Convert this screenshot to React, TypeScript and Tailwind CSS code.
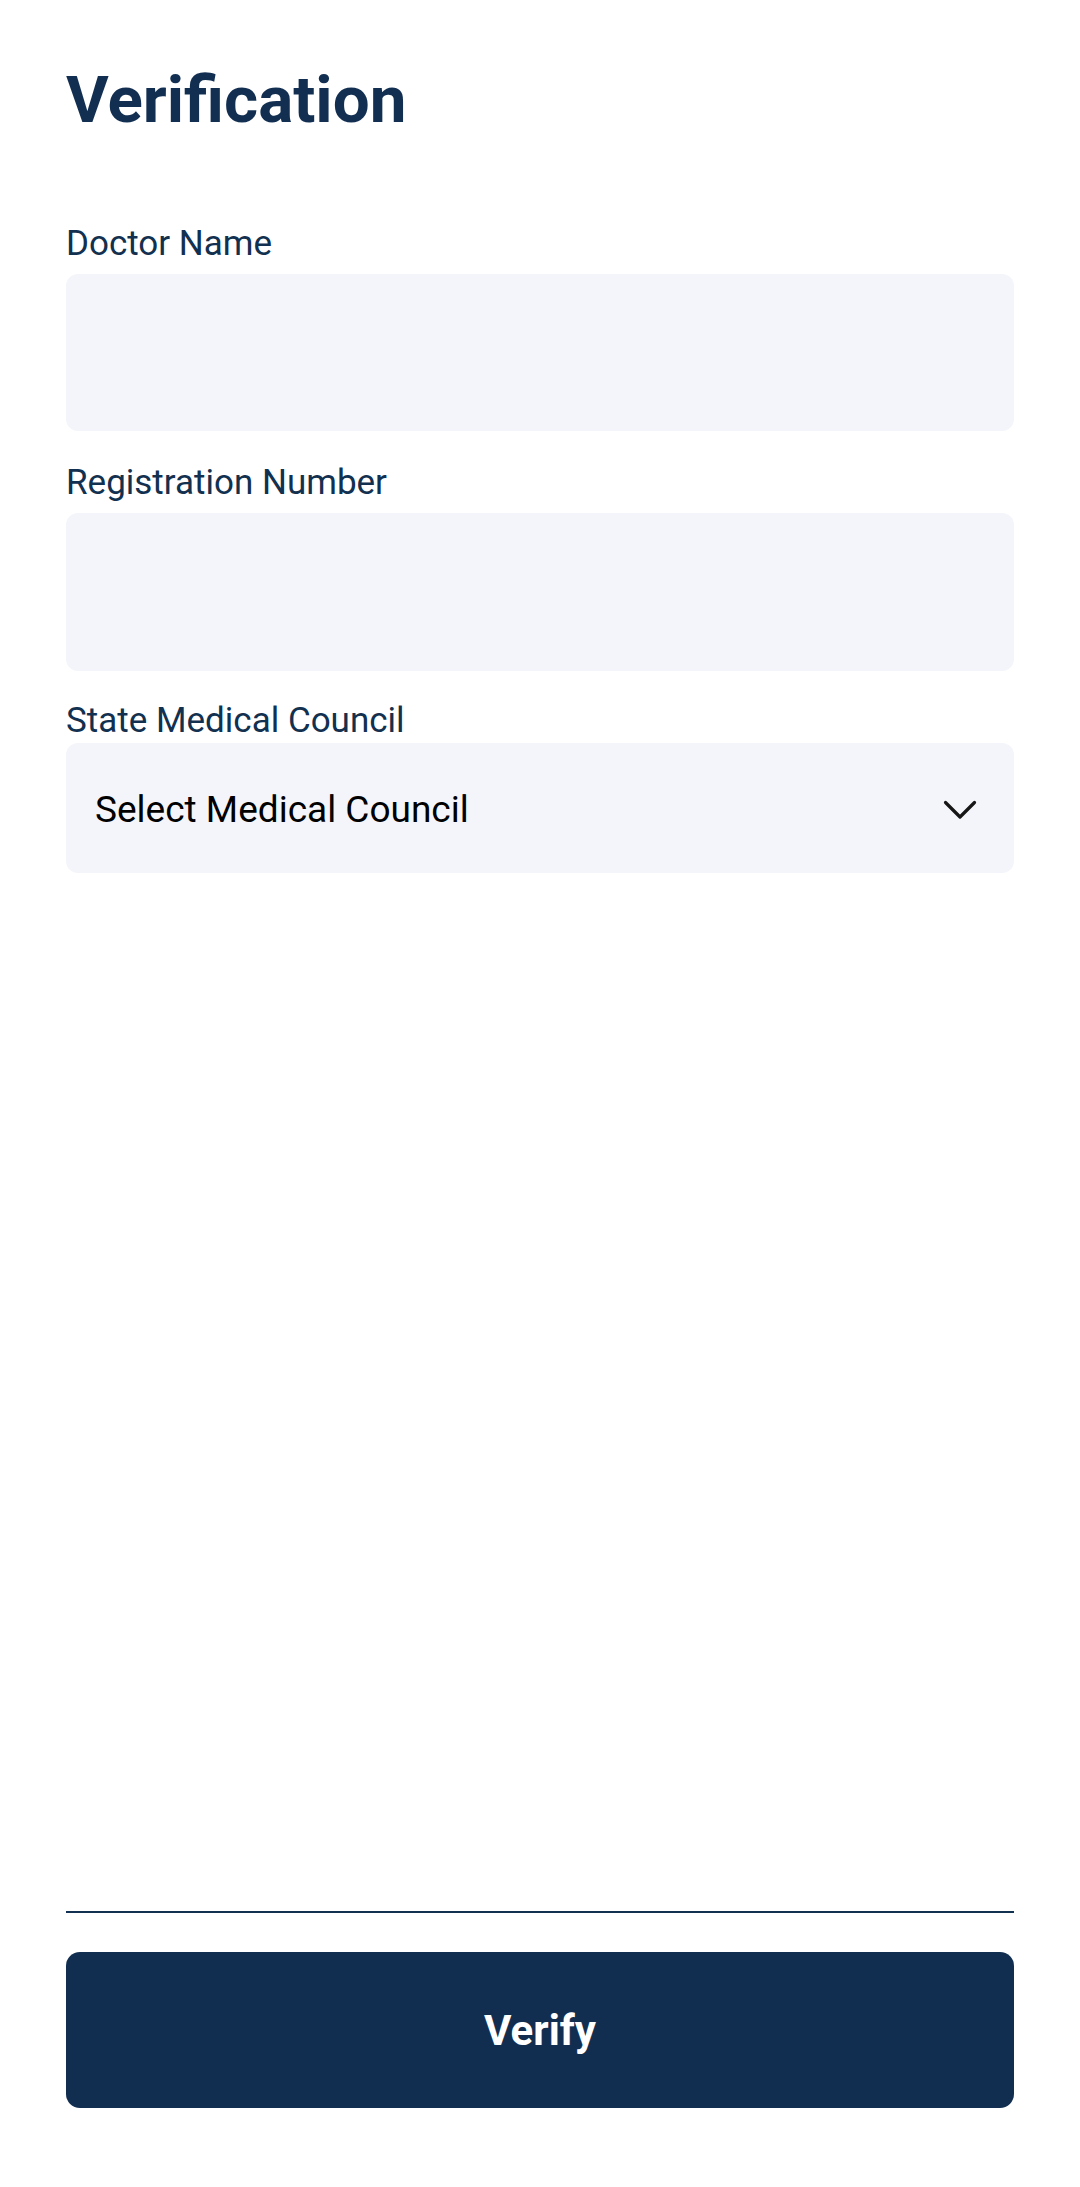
import React from 'react';

const fieldLabel = 'block text-[35px] leading-[42px] text-[#12304f]';
const fieldBox = 'w-full rounded-[12px] bg-[#f4f5fa]';

const App: React.FC = () => {
  return (
    <div
      className="min-h-screen flex flex-col bg-white px-[66px] pt-[61px] pb-[79px]"
      style={{ fontFamily: 'Roboto, "Noto Sans", sans-serif' }}
    >
      {/* Header */}
      <h1 className="text-[65.5px] leading-[77px] font-bold text-[#122f51]">Verification</h1>

      {/* Form */}
      <form className="flex flex-col mt-[85px]">
        <label className={fieldLabel} htmlFor="doctor-name">Doctor Name</label>
        <input id="doctor-name" type="text" className={`${fieldBox} h-[157px] mt-[9px] outline-none px-[30px] text-[36px]`} />

        <label className={`${fieldLabel} mt-[31px]`} htmlFor="reg-number">Registration Number</label>
        <input id="reg-number" type="text" className={`${fieldBox} h-[158px] mt-[9px] outline-none px-[30px] text-[36px]`} />

        <label className={`${fieldLabel} mt-[29px]`} htmlFor="council">State Medical Council</label>
        <button
          id="council"
          type="button"
          className={`${fieldBox} h-[130px] mt-[1px] flex items-center justify-between pl-[29px] pr-[37px] pt-[4px]`}
        >
          <span className="text-[37px] leading-[42px] text-black">Select Medical Council</span>
          <svg width="34" height="20" viewBox="0 0 34 20" fill="none" aria-hidden="true">
            <path d="M2.5 2.5 L17 17 L31.5 2.5" stroke="#161616" strokeWidth="3.2" strokeLinecap="round" strokeLinejoin="round" />
          </svg>
        </button>
      </form>

      <div className="flex-1" />

      {/* Footer */}
      <div className="h-[2px] bg-[#12304f]" />
      <button
        type="button"
        className="mt-[39px] h-[156px] w-full rounded-[14px] bg-[#112e51] text-white text-[42px] font-bold"
      >
        Verify
      </button>
    </div>
  );
};

export default App;
